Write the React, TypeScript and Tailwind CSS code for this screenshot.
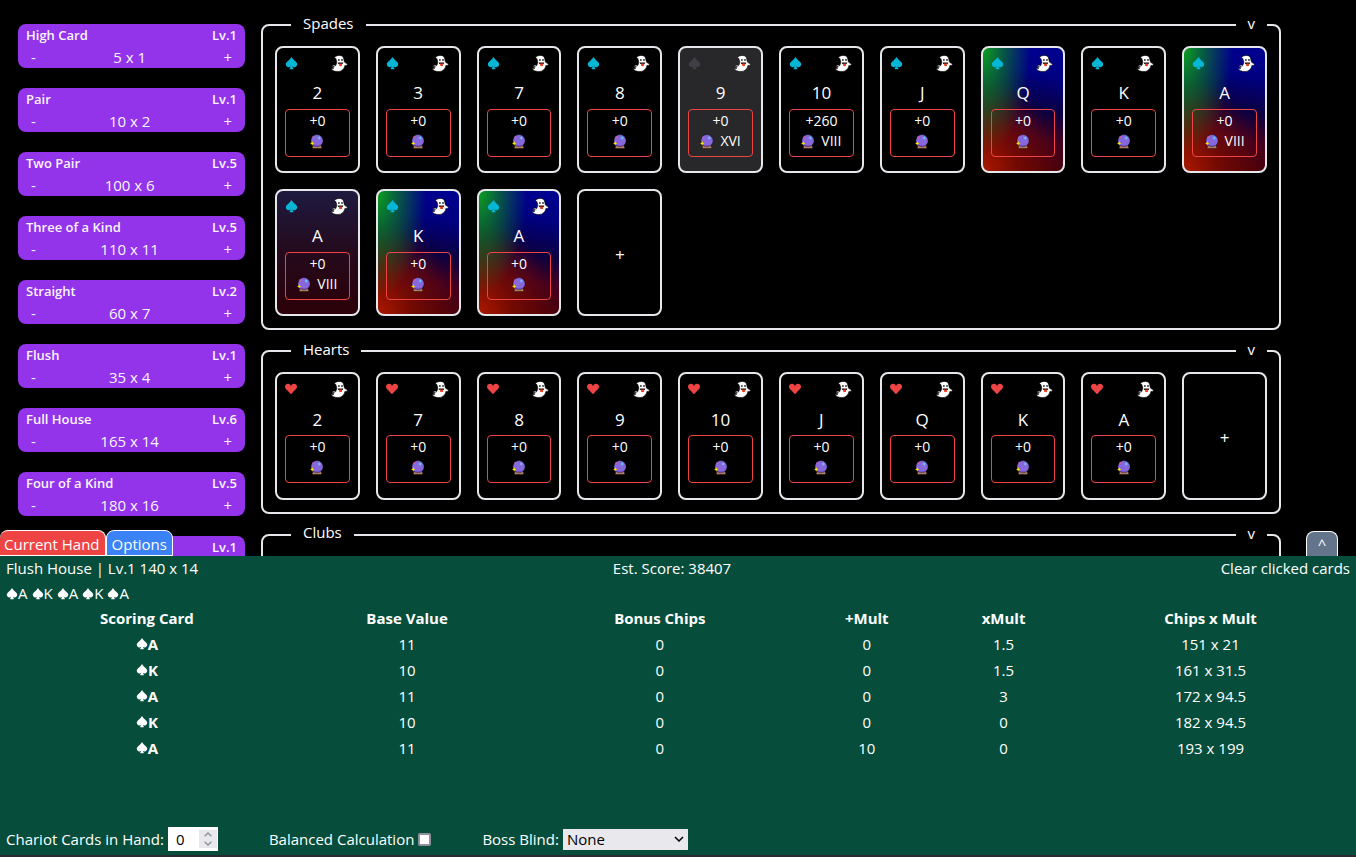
import { useState } from "react";
import { BsSuitHeartFill, BsSuitSpadeFill } from "react-icons/bs";

type Finish = "plain" | "stone" | "wild" | "dusk";
type Suit = "spade" | "heart";

interface CardData {
  rank: string;
  bonus: string;
  tarot?: string;
  finish?: Finish;
}

const hands = [
  { name: "High Card", level: 1, score: "5 x 1" },
  { name: "Pair", level: 1, score: "10 x 2" },
  { name: "Two Pair", level: 5, score: "100 x 6" },
  { name: "Three of a Kind", level: 5, score: "110 x 11" },
  { name: "Straight", level: 2, score: "60 x 7" },
  { name: "Flush", level: 1, score: "35 x 4" },
  { name: "Full House", level: 6, score: "165 x 14" },
  { name: "Four of a Kind", level: 5, score: "180 x 16" },
  { name: "Straight Flush", level: 1, score: "100 x 8" },
];

const spades: CardData[] = [
  { rank: "2", bonus: "+0" },
  { rank: "3", bonus: "+0" },
  { rank: "7", bonus: "+0" },
  { rank: "8", bonus: "+0" },
  { rank: "9", bonus: "+0", tarot: "XVI", finish: "stone" },
  { rank: "10", bonus: "+260", tarot: "VIII" },
  { rank: "J", bonus: "+0" },
  { rank: "Q", bonus: "+0", finish: "wild" },
  { rank: "K", bonus: "+0" },
  { rank: "A", bonus: "+0", tarot: "VIII", finish: "wild" },
  { rank: "A", bonus: "+0", tarot: "VIII", finish: "dusk" },
  { rank: "K", bonus: "+0", finish: "wild" },
  { rank: "A", bonus: "+0", finish: "wild" },
];

const hearts: CardData[] = ["2", "7", "8", "9", "10", "J", "Q", "K", "A"].map(
  (rank) => ({ rank, bonus: "+0" }),
);

const scoring = [
  ["A", "11", "0", "0", "1.5", "151 x 21"],
  ["K", "10", "0", "0", "1.5", "161 x 31.5"],
  ["A", "11", "0", "0", "3", "172 x 94.5"],
  ["K", "10", "0", "0", "0", "182 x 94.5"],
  ["A", "11", "0", "10", "0", "193 x 199"],
];

const finishes: Record<Finish, string> = {
  plain: "bg-black",
  stone: "bg-[#28282a]",
  wild: "bg-[radial-gradient(60%_85%_at_0%_0%,rgb(12_160_30)_0%,rgb(12_140_30/0.65)_40%,transparent_100%),radial-gradient(95%_75%_at_0%_100%,rgb(170_24_0)_0%,rgb(130_14_0/0.7)_45%,transparent_100%),linear-gradient(190deg,rgb(0_0_145)_0%,rgb(0_0_130)_22%,rgb(10_0_66)_48%,rgb(66_0_30)_70%,rgb(80_0_0)_100%)]",
  dusk: "bg-[linear-gradient(to_bottom,#1e1a40,#240a1c_50%,#2c0008)]",
};

function Ghost() {
  return (
    <svg viewBox="0 0 17 17" className="size-[17px]" aria-hidden="true">
      <path
        d="M5 1.200C7.500-.1 11.400.1 12.500 2.900c.5 1.400.5 2.900 1 4.200.4.700 1.300.9 2.300 1.400.7.5.7 1.300.1 1.700-.6.300-1.400.2-2 .2C13.500 13.800 10.600 16.500 7 16.600 3.500 16.600.7 15.200.5 13.800c.2-.7 1.500-.1 2.300-.6C1.500 12.600 1.100 11.500 1.800 10.600c.9-.9 2.100-.6 2.700.2C5.600 9.200 5.900 7.200 5.500 5.400 5 4 4.600 2.900 3.600 2.500 3.600 1.900 4.400 1.400 5 1.200z"
        fill="#fff"
        stroke="#000"
        strokeWidth=".6"
      />
      <circle cx="2.800" cy="11.800" r=".8" fill="#111" />
      <ellipse cx="7.900" cy="5" rx=".8" ry="1.100" fill="#111" />
      <ellipse cx="11" cy="5" rx=".8" ry="1.100" fill="#111" />
      <path d="M6.600 7.500h5.700c0 1.200-1.200 1.900-2.800 1.900s-2.900-.7-2.900-1.900z" fill="#111" />
      <path d="M8.200 8.400h2.900v1.700c0 1.600-2.900 1.600-2.900 0z" fill="#f03a17" />
    </svg>
  );
}

function CrystalBall() {
  return (
    <svg viewBox="0 0 14 15" className="h-[15px] w-[14px]" aria-hidden="true">
      <path d="M3.200 11h7.600l1 2.800c0 .5-.3.700-.7.700H2.900c-.4 0-.7-.3-.7-.7z" fill="#b8825c" stroke="#000" strokeWidth=".4" />
      <circle cx="7" cy="6.700" r="6.100" fill="#8668dc" stroke="#000" strokeWidth=".4" />
      <path d="M2.800 10.700C5 13.300 9.200 13.200 11.300 10.600c-2.600 1.200-5.900 1.100-8.500.1z" fill="#6544b5" />
      <circle cx="3.200" cy="3.200" r=".9" fill="#d05cae" />
      <path d="M9.200 2.100l.5 1.400 1.400.5-1.400.5-.5 1.400-.5-1.400L7.300 4l1.400-.5z" fill="#5fe0ff" />
      <path d="M2.200 7.100l.7 1.600 1.600.7-1.600.7-.7 1.600-.7-1.600L0 9.400l1.500-.7z" fill="#ffe600" />
    </svg>
  );
}

function PlayingCard({ card, suit }: { card: CardData; suit: Suit }) {
  const finish = card.finish ?? "plain";
  const Icon = suit === "spade" ? BsSuitSpadeFill : BsSuitHeartFill;
  const size = suit === "spade" ? "size-[13px]" : "size-3";
  const tint =
    finish === "stone" ? "text-[#3f3f46]" : suit === "spade" ? "text-[#06b6d4]" : "text-[#ef4444]";
  return (
    <article className={`flex aspect-[2/3] flex-col rounded-lg border-2 border-gray-200 px-2 pt-[7px] ${finishes[finish]}`}>
      <div className="flex h-4 items-center justify-between pr-0.5">
        <Icon className={`${size} ${tint}`} />
        <Ghost />
      </div>
      <div className="mt-2 flex h-7 items-center justify-center text-[17px]">{card.rank}</div>
      <div className="mt-0.5 flex h-12 flex-col items-center rounded-sm border border-[#ef4444] pt-px text-sm leading-5">
        <span>{card.bonus}</span>
        <span className="flex h-5 items-center gap-1.5">
          <CrystalBall />
          {card.tarot}
        </span>
      </div>
    </article>
  );
}

function SuitSection({ title, cards, suit }: { title: string; cards: CardData[]; suit: Suit }) {
  return (
    <section className="rounded-lg border-2 border-gray-200 px-3 pb-3">
      <header className="-mt-[15px] flex h-6 items-center justify-between pl-4">
        <h2 className="bg-black px-3">{title}</h2>
        <button className="bg-black px-3 leading-6">v</button>
      </header>
      <div className="mt-[11px] grid grid-cols-10 gap-4">
        {cards.map((card, i) => (
          <PlayingCard key={i} card={card} suit={suit} />
        ))}
        <button className="aspect-[2/3] rounded-lg border-2 border-gray-200 pt-1 text-[17px]" aria-label={`Add to ${title}`}>
          +
        </button>
      </div>
    </section>
  );
}

function Spade({ rank }: { rank: string }) {
  return (
    <span className="inline-flex items-center">
      <BsSuitSpadeFill className="size-3" />
      {rank}
    </span>
  );
}

function Chevron({ up = false }: { up?: boolean }) {
  return (
    <svg viewBox="0 0 8 5" className="h-[5px] w-2" fill="none" stroke="#8f8f9d" strokeWidth="1.4" aria-hidden="true">
      <path d={up ? "M.7 4.300 4 1l3.300 3.300" : "M.7.700 4 4 7.300.700"} />
    </svg>
  );
}

export default function App() {
  const [chariots, setChariots] = useState(0);
  return (
    <div className="flex h-screen flex-col overflow-hidden bg-black font-['Open_Sans','Noto_Sans',sans-serif] text-[15px] text-white">
      <main className="flex min-h-0 flex-1 gap-4 overflow-hidden pt-6 pr-[75px] pl-[18px]">
        <aside className="flex w-[227px] shrink-0 flex-col gap-5">
          {hands.map((hand) => (
            <div key={hand.name} className="h-11 shrink-0 rounded-lg bg-[#9333ea] px-2 text-purple-50">
              <div className="flex h-[22px] items-center justify-between pt-0.5 text-[13px] font-semibold">
                <span>{hand.name}</span>
                <span>Lv.{hand.level}</span>
              </div>
              <div className="flex h-[22px] items-center justify-between px-[5px]">
                <button aria-label={`Lower ${hand.name}`}>-</button>
                <span>{hand.score}</span>
                <button aria-label={`Raise ${hand.name}`}>+</button>
              </div>
            </div>
          ))}
        </aside>
        <div className="flex min-w-0 flex-1 flex-col gap-5">
          <SuitSection title="Spades" cards={spades} suit="spade" />
          <SuitSection title="Hearts" cards={hearts} suit="heart" />
          <SuitSection title="Clubs" cards={[]} suit="spade" />
        </div>
      </main>

      <footer className="relative flex h-[301px] shrink-0 flex-col border-b-2 border-[#2b2a33] bg-[#064e3b]">
        <nav className="absolute bottom-full left-0 flex h-[26px]">
          <button className="rounded-t-lg border border-l-0 border-white bg-[#ef4444] pt-0.5 pr-[5px] pl-1">Current Hand</button>
          <button className="rounded-t-lg border border-white bg-[#3b82f6] px-[5px] pt-0.5">Options</button>
        </nav>
        <button className="absolute right-[18px] bottom-full h-[25px] w-8 rounded-t-lg border border-b-0 border-white bg-[#64748b]">
          ^
        </button>

        <div className="grid h-6 grid-cols-3 items-center px-1.5">
          <span>Flush House | Lv.1 140 x 14</span>
          <span className="pr-3 text-center">Est. Score: 38407</span>
          <button className="justify-self-end">Clear clicked cards</button>
        </div>
        <div className="flex h-[25px] items-center gap-1 px-1.5 pt-0.5">
          {scoring.map((row, i) => (
            <Spade key={i} rank={row[0]} />
          ))}
        </div>
        <div className="pr-2">
          <table className="w-full table-fixed text-center">
            <thead>
              <tr className="h-[26px]">
                <th className="w-[21.8%]">Scoring Card</th>
                <th className="w-[16.8%]">Base Value</th>
                <th className="w-[20.7%]">Bonus Chips</th>
                <th className="w-[10%]">+Mult</th>
                <th className="w-[10.3%]">xMult</th>
                <th>Chips x Mult</th>
              </tr>
            </thead>
            <tbody>
              {scoring.map(([rank, ...values], i) => (
                <tr key={i} className="h-[26px]">
                  <th>
                    <Spade rank={rank} />
                  </th>
                  {values.map((value, j) => (
                    <td key={j}>{value}</td>
                  ))}
                </tr>
              ))}
            </tbody>
          </table>
        </div>

        <form className="mt-auto mb-1 flex h-6 items-center gap-[51px] px-1.5">
          <label className="flex items-center gap-1">
            Chariot Cards in Hand:
            <span className="flex h-6 w-[50px] items-center bg-white pr-px">
              <input
                type="number"
                value={chariots}
                onChange={(e) => setChariots(Number(e.target.value))}
                className="w-full min-w-0 appearance-none bg-transparent pl-2 text-black outline-none [-moz-appearance:textfield] [&::-webkit-inner-spin-button]:appearance-none"
              />
              <span className="flex h-[18px] w-[18px] shrink-0 flex-col items-center justify-center gap-1 bg-[#e9e9ed]">
                <Chevron up />
                <Chevron />
              </span>
            </span>
          </label>
          <label className="flex items-center gap-1">
            Balanced Calculation
            <input type="checkbox" className="size-[13px] appearance-none rounded-xs border-2 border-[#8f8f9d] bg-white checked:bg-blue-600" />
          </label>
          <label className="flex items-center gap-1">
            Boss Blind:
            <span className="grid h-[21px] w-[125px] items-center bg-[#e9e9ed] text-black">
              <select className="col-start-1 row-start-1 h-[21px] w-full appearance-none bg-transparent pl-1 leading-5">
                <option>None</option>
              </select>
              <svg viewBox="0 0 10 6" className="pointer-events-none col-start-1 row-start-1 mr-1 h-1.5 w-2.5 justify-self-end" fill="none" stroke="#000" strokeWidth="1.500" aria-hidden="true">
                <path d="M1 1l4 4 4-4" />
              </svg>
            </span>
          </label>
        </form>
      </footer>
    </div>
  );
}
